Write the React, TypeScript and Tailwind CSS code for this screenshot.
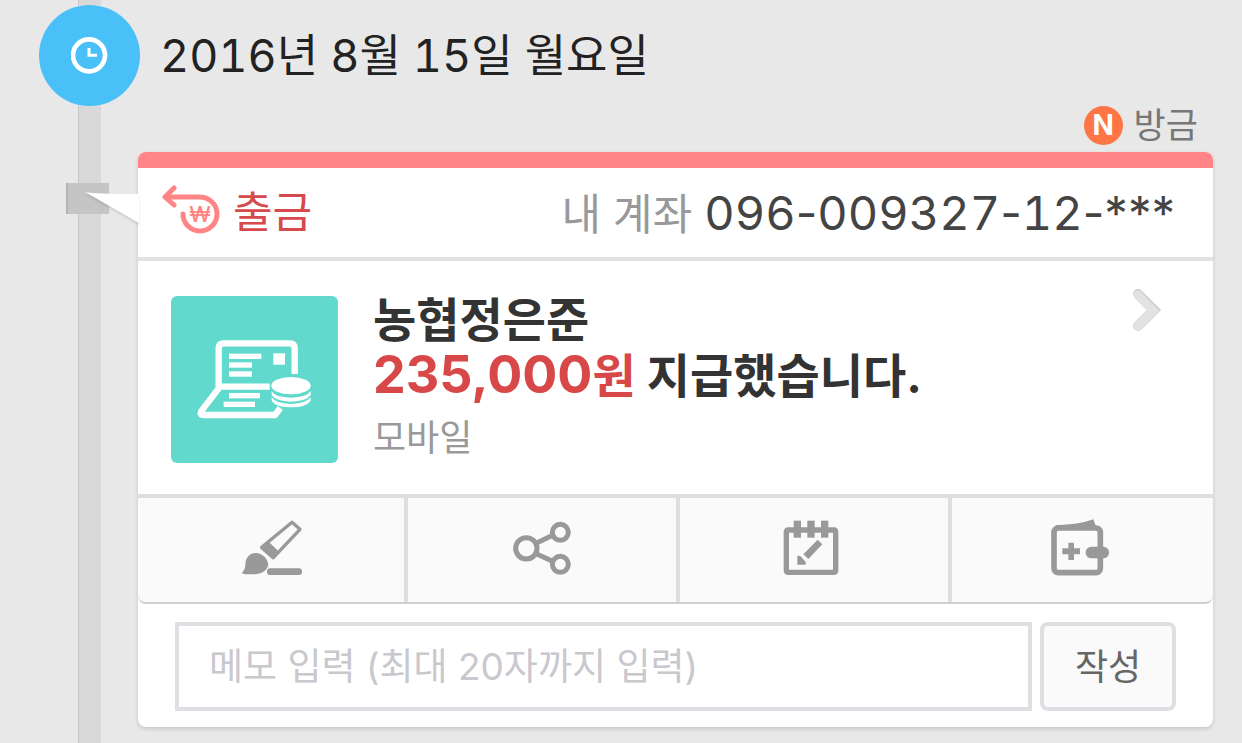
import React, { useState } from "react";

const MEMO_LIMIT = 20;

const ACCOUNT_NUMBER = "096-009327-12-***";

const ClockIcon = () => (
  <svg aria-hidden="true" className="size-[38px]" fill="none" stroke="#fff" viewBox="0 0 114 114">
    <circle cx="54" cy="55" r="48" strokeWidth="14" />
    <path d="M54 33V55H78" strokeWidth="9" />
  </svg>
);

const WithdrawIcon = () => (
  <svg aria-hidden="true" className="size-[60px] shrink-0" viewBox="0 -5 60 60">
    <g fill="none" stroke="#ff8585" strokeWidth="5">
      <path d="M4 9H37C47 9 55 16 55 26A17 17 0 0 1 21 26" strokeLinecap="round" />
      <path d="M12 0L3 9L12 17" strokeLinecap="round" strokeLinejoin="round" />
    </g>
    <text
      className="font-['Inter',sans-serif] text-[22px] font-medium"
      fill="#ff8585"
      textAnchor="middle"
      x="38"
      y="34"
    >
      ₩
    </text>
  </svg>
);

const LaptopIcon = () => (
  <svg aria-hidden="true" className="size-full" viewBox="33 48 501 501">
    <g fill="none" stroke="#fff" strokeWidth="19">
      <path d="M176 320V205Q176 190 191 190H389Q404 190 404 205V282" />
      <path d="M329 320H180L125 392Q117 405 132 405H345L361 384" strokeLinejoin="round" />
    </g>
    <g fill="#fff">
      <rect height="16" width="97" x="207" y="221" />
      <rect height="16" width="69" x="207" y="247" />
      <rect height="16" width="69" x="207" y="274" />
      <rect height="34" width="35" x="340" y="220" />
      <rect height="16" width="93" x="207" y="339" />
      <rect height="16" width="94" x="191" y="365" />
      <ellipse cx="393" cy="317" rx="59" ry="26" />
      <path d="M335 333Q345 352 393 353Q441 352 452 333V345Q440 363 393 365Q346 363 335 345Z" />
      <path d="M335 352Q346 370 393 372Q440 370 452 352V362Q440 381 393 382Q346 381 335 362Z" />
    </g>
  </svg>
);

const BrushIcon = () => (
  <svg aria-hidden="true" className="h-[60px] w-[65px]" viewBox="60 85 195 180">
    <path
      d="M219 98L243 119L163 204L128 173Z"
      fill="none"
      stroke="#999"
      strokeLinejoin="round"
      strokeWidth="10"
    />
    <path d="M150 157L180 186L160 208L123 176Z" fill="#999" />
    <path
      d="M68 250Q80 240 79 222C81 203 92 190 110 190C130 191 146 206 148 226C144 244 126 253 106 254C92 254 76 255 68 250Z"
      fill="#999"
    />
    <rect fill="#999" height="20" rx="9" width="105" x="144" y="236" />
  </svg>
);

const ShareIcon = () => (
  <svg
    aria-hidden="true"
    className="h-[60px] w-[62px]"
    fill="none"
    stroke="#999"
    strokeWidth="15"
    viewBox="869 85 186 180"
  >
    <circle cx="915" cy="176" r="32" />
    <circle cx="1017" cy="128" r="24" />
    <circle cx="1017" cy="224" r="24" />
    <path d="M946 160L994 137M946 193L994 215" />
  </svg>
);

const CalendarIcon = () => (
  <svg aria-hidden="true" className="mr-[6px] size-[60px]" viewBox="64 85 180 180">
    <rect fill="none" height="127" rx="5" stroke="#999" strokeWidth="16" width="148" x="80" y="121" />
    <g fill="#999">
      <rect height="51" width="22" x="102" y="93" />
      <rect height="51" width="22" x="143" y="93" />
      <rect height="51" width="22" x="184" y="93" />
      <path d="M174 150L188 164L146 208L131 194Z" />
      <path d="M113 198L122 199L138 217V225H113Z" />
    </g>
  </svg>
);

const WalletIcon = () => (
  <svg aria-hidden="true" className="mr-[6px] h-[60px] w-[62px]" viewBox="870 83 186 180">
    <rect fill="none" height="134" rx="13" stroke="#999" strokeWidth="17" width="139" x="885" y="113" />
    <g fill="#999">
      <path d="M890 105Q960 103 1003 87L1011 108H890Z" />
      <rect height="35" rx="17" width="70" x="980" y="169" />
      <path d="M928 157H945V174H963V192H945V209H928V192H910V174H928Z" />
    </g>
  </svg>
);

const actions = [
  { label: "꾸미기", icon: <BrushIcon /> },
  { label: "공유", icon: <ShareIcon /> },
  { label: "일정", icon: <CalendarIcon /> },
  { label: "가계부", icon: <WalletIcon /> },
];

const TimelineRail = () => (
  <div className="ml-[39px] flex w-[99px] shrink-0 flex-col">
    <div className="ml-[39px] h-[5px] w-[23px] border-l border-[#c6c6c6] bg-[#d9d9d9]" />
    <div className="flex size-[101px] items-center justify-center rounded-full bg-[#49c0f8]">
      <ClockIcon />
    </div>
    <div className="ml-[39px] h-[77px] w-[23px] border-l border-[#c6c6c6] bg-[#d9d9d9]" />
    <div className="ml-[27px] h-[31px] w-[43px] border-l-2 border-[#b3b3b3] bg-[#c5c5c5]" />
    <div className="ml-[39px] w-[23px] flex-1 border-l border-[#c6c6c6] bg-[#d9d9d9]" />
  </div>
);

// Digits share one width, separators and masked characters keep their own
const AccountNumber = ({ value }: { value: string }) => (
  <span className="text-[47px] text-[#444]">
    {value.split(/(\d+)/).map((part, i) => (
      <span key={i} className={/^\d/.test(part) ? "tabular-nums" : undefined}>
        {part}
      </span>
    ))}
  </span>
);

const TransactionCard = () => {
  const [memo, setMemo] = useState("");

  const handleSubmit = (e: React.FormEvent<HTMLFormElement>) => {
    e.preventDefault();
    setMemo("");
  };

  return (
    <article className="relative rounded-lg bg-white shadow-[0_2px_4px_rgba(0,0,0,0.14)]">
      {/* Speech bubble tail pointing at the rail */}
      <svg
        aria-hidden="true"
        className="absolute top-[38px] -left-[54px] h-[36px] w-[55px] drop-shadow-[0_2px_1px_rgba(0,0,0,0.12)]"
        viewBox="0 0 55 36"
      >
        <path d="M1 2Q10 4 55 4V33Z" fill="#fff" />
      </svg>
      <div className="h-4 rounded-t-lg bg-[#ff8588]" />
      <header className="flex h-[93px] items-center justify-between border-b-4 border-[#e2e2e2] pr-[38px] pl-6">
        <div className="flex items-center gap-[11px]">
          <WithdrawIcon />
          <span className="text-[43px] leading-none text-[#d64a4d]">출금</span>
        </div>
        <p className="flex items-baseline gap-3 leading-none whitespace-nowrap">
          <span className="text-[43px] text-[#999]">내 계좌</span>
          <AccountNumber value={ACCOUNT_NUMBER} />
        </p>
      </header>
      <a
        className="flex items-center gap-[35px] border-b-4 border-[#dedede] pt-[32px] pr-[51px] pb-[29px] pl-[33px]"
        href="#detail"
      >
        <div className="size-[167px] shrink-0 rounded-md bg-[#61dacd]">
          <LaptopIcon />
        </div>
        <div className="flex-1 text-[47px] font-bold text-[#333]">
          <p className="leading-[54px]">농협정은준</p>
          <p className="leading-[58px]">
            <span className="text-[52px] leading-none text-[#d94848]">235,000</span>
            <span className="text-[#d94848]">원</span> 지급했습니다.
          </p>
          <p className="mt-[6px] text-4xl leading-[54px] font-normal text-[#999]">모바일</p>
        </div>
        <svg aria-hidden="true" className="-mt-2 h-[46px] w-[32px] shrink-0 self-start" fill="none" viewBox="0 0 32 46">
          <path d="M8 9L24 25L8 41" stroke="#cfcfcf" strokeLinecap="round" strokeWidth="10" />
          <path d="M8 10L23 26L8 41" stroke="#e2e2e2" strokeLinecap="round" strokeWidth="9" />
        </svg>
      </a>
      <div className="grid grid-cols-[270fr_272fr_272fr_261fr] overflow-hidden rounded-b-lg border-b-2 border-[#d0d0d0] bg-[#fafafa]">
        {actions.map((action) => (
          <button
            key={action.label}
            aria-label={action.label}
            className="flex h-[104px] items-center justify-center border-r-4 border-[#dedede] pb-1 last:border-r-0"
            type="button"
          >
            {action.icon}
          </button>
        ))}
      </div>
      <form className="flex gap-2 px-[37px] pt-[18px] pb-4" onSubmit={handleSubmit}>
        <input
          aria-label="메모"
          className="h-[89px] min-w-0 flex-1 border-4 border-[#dfdfe3] bg-white px-[30px] text-[37px] text-[#444] placeholder:text-[#c8c8ce]"
          maxLength={MEMO_LIMIT}
          placeholder="메모 입력 (최대 20자까지 입력)"
          type="text"
          value={memo}
          onChange={(e) => setMemo(e.target.value)}
        />
        <button
          className="w-[136px] rounded-lg border-4 border-[#dfdfe3] bg-[#fafafa] text-4xl text-[#666]"
          type="submit"
        >
          작성
        </button>
      </form>
    </article>
  );
};

const App = () => {
  return (
    <main className="flex min-h-screen bg-[#e8e8e8] font-['Inter','Noto_Sans_CJK_KR',sans-serif]">
      <TimelineRail />
      <section className="min-w-0 flex-1 pt-[5px] pr-[29px] pb-4">
        <h1 className="flex h-[102px] items-center pl-[22px] text-[45px] text-[#222] tabular-nums">
          2016년 8월 15일 월요일
        </h1>
        <div className="mb-[9px] flex h-9 items-center justify-end gap-[11px] pr-[15px]">
          <span className="flex size-[39px] shrink-0 items-center justify-center rounded-full bg-[#ff7545] text-[28px] leading-none font-bold text-white">
            N
          </span>
          <span className="text-[35px] leading-none text-[#777]">방금</span>
        </div>
        <TransactionCard />
      </section>
    </main>
  );
};

export default App;
